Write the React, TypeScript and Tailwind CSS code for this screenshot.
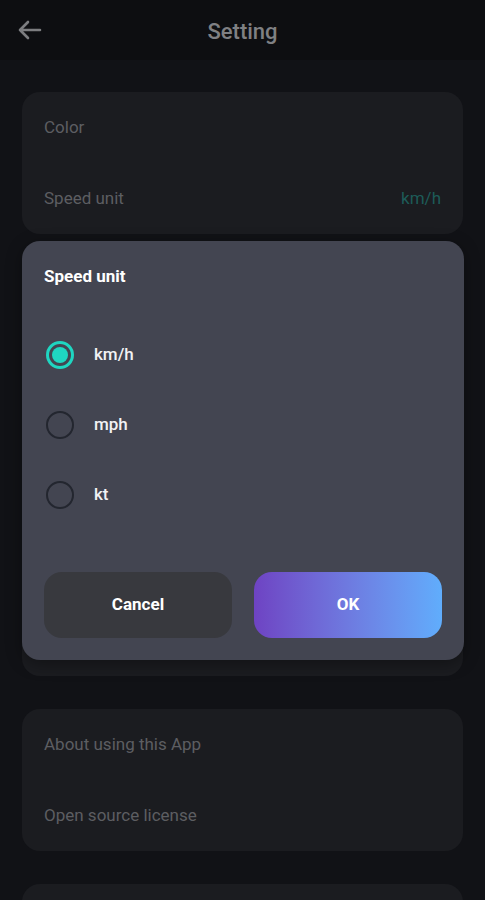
import React from "react";

function Row({ label, value }: { label: string; value?: string }) {
  return (
    <div className="flex h-[71px] items-center justify-between px-[22px]">
      <span className="text-[17px] text-[#5d5e62]">{label}</span>
      {value && <span className="text-[17px] text-[#1d5b58]">{value}</span>}
    </div>
  );
}

function Radio({ label, checked }: { label: string; checked?: boolean }) {
  return (
    <div className="flex h-[70px] items-center gap-[20px] pl-[24px]">
      {checked ? (
        <div className="flex h-[28px] w-[28px] items-center justify-center rounded-full border-[3px] border-[#1fd6c1]">
          <div className="h-[16px] w-[16px] rounded-full bg-[#1fd6c1]" />
        </div>
      ) : (
        <div className="h-[28px] w-[28px] rounded-full border-[2.5px] border-[#23262f]" />
      )}
      <span className="text-[17px] font-medium text-[#f2f2f4]">{label}</span>
    </div>
  );
}

export default function App() {
  return (
    <div
      className="relative h-[900px] w-[485px] overflow-hidden bg-[#111216]"
      style={{ fontFamily: "Roboto, 'Noto Sans', sans-serif" }}
    >
      <div className="relative flex h-[60px] items-center justify-center bg-[#0d0e11]">
        <svg
          className="absolute left-[17px] top-[19px]"
          width="26"
          height="22"
          viewBox="0 0 26 22"
          fill="none"
          stroke="#7c7d80"
          strokeWidth="2.6"
          strokeLinecap="round"
          strokeLinejoin="round"
        >
          <path d="M23 11H3M11 3L3 11l8 8" />
        </svg>
        <span className="pt-[2px] text-[22px] font-medium text-[#7f8083]">Setting</span>
      </div>

      <div className="flex flex-col gap-[33px] px-[22px] pt-[32px]">
        <div className="rounded-[18px] bg-[#1b1c20]">
          <Row label="Color" />
          <Row label="Speed unit" value="km/h" />
        </div>
        <div className="h-[409px] rounded-[18px] bg-[#1b1c20]" />
        <div className="rounded-[18px] bg-[#1b1c20]">
          <Row label="About using this App" />
          <Row label="Open source license" />
        </div>
        <div className="h-[80px] rounded-[18px] bg-[#1b1c20]" />
      </div>

      <div className="absolute left-[22px] top-[241px] h-[419px] w-[442px] rounded-[18px] bg-[#434551] shadow-[0_4px_16px_rgba(0,0,0,0.35)]">
        <div className="pl-[22px] pt-[23px] text-[17px] font-bold text-white">Speed unit</div>
        <div className="mt-[30px]">
          <Radio label="km/h" checked />
          <Radio label="mph" />
          <Radio label="kt" />
        </div>
        <div className="mt-[42px] flex gap-[22px] px-[22px]">
          <button className="flex h-[66px] flex-1 items-center justify-center rounded-[18px] bg-[#38393e] text-[17px] font-bold text-white">
            Cancel
          </button>
          <button className="flex h-[66px] flex-1 items-center justify-center rounded-[18px] bg-gradient-to-r from-[#6e43c3] to-[#60adfc] text-[17px] font-bold text-white">
            OK
          </button>
        </div>
      </div>
    </div>
  );
}
